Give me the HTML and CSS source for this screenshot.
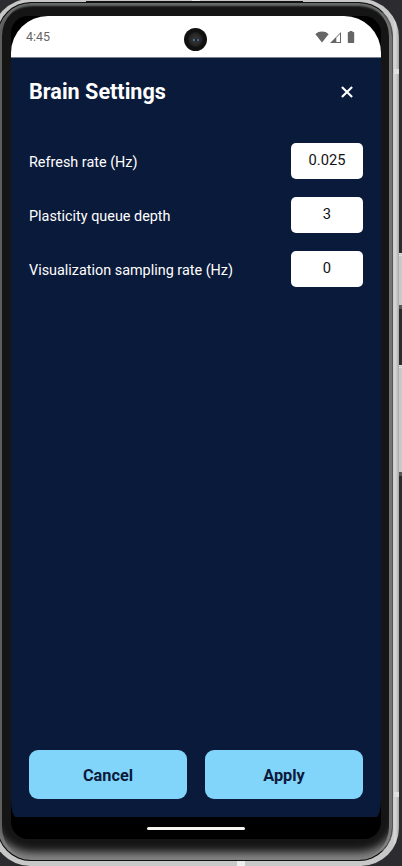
FILE: index.html
```html
<!DOCTYPE html>
<html lang="en">
<head>
<meta charset="utf-8">
<title>Brain Settings</title>
<link rel="stylesheet" href="styles.css">
</head>
<body>
<div class="side-button power"></div>
<div class="side-button volume"></div>
<div class="device">
  <i class="antenna top"></i><i class="antenna right upper"></i><i class="antenna right lower"></i><i class="antenna bottom"></i><i class="speaker"></i>
  <div class="bezel">
    <div class="screen">
      <div class="display">
        <header class="status">
          <span class="time">4:45</span>
          <svg class="status-icons" width="42" height="14" viewBox="0 0 42 14">
            <path d="M.4 4.200C2.200 2.200 4.500 1.500 7 1.500s4.800.7 6.600 2.700L7 12.500z"/>
            <path fill-rule="evenodd" d="M15 13 26 2v11zM21.300 7.700V12H25V4z"/>
            <path d="M33.500 2h1V1h3v1h1q.7 0 .7.700v9.600q0 .7-.7.700h-5q-.7 0-.7-.7V2.700q0-.7.7-.7z"/>
          </svg>
          <div class="camera"><i></i></div>
        </header>
        <main class="app">
          <div class="heading">
            <h1>Brain Settings</h1>
            <button class="close" aria-label="Close"><svg width="12" height="12" viewBox="0 0 12 12"><path d="M.9.9 11.100 11.100M11.100.9.9 11.100"/></svg></button>
          </div>
          <div class="fields">
            <div class="field"><span>Refresh rate (Hz)</span><div class="value">0.025</div></div>
            <div class="field"><span>Plasticity queue depth</span><div class="value">3</div></div>
            <div class="field"><span>Visualization sampling rate (Hz)</span><div class="value">0</div></div>
          </div>
          <div class="actions"><button>Cancel</button><button>Apply</button></div>
        </main>
        <div class="navigation"><i></i></div>
      </div>
    </div>
  </div>
</div>
</body>
</html>
```
FILE: styles.css
```css
* { box-sizing: border-box; }
html, body { width: 402px; height: 866px; margin: 0; overflow: hidden; }
body { position: relative; background: #2c2c30; font-family: Roboto, sans-serif; }
.device {
  position: relative;
  width: 407px; height: 867px;
  margin: -1px 0 0 -8px;
  padding: 3px 6px 5px 5px;
  border-radius: 38px;
  background: linear-gradient(90deg, #c8c8c8 0 401px, #d8d8d8 403px, #c4c4c4 405px, #a5a5a5);
}
.bezel {
  height: 859px;
  padding: 13px 12px 21px 13px;
  border: 1px solid #111;
  border-right-color: #555;
  border-radius: 34px;
  background: #151515;
  box-shadow: inset 0 -13px 9px -5px #858585, inset 0 3px 2px #686c69, inset 4px 0 #5d5d5d, inset -3px 0 #747474;
}
.screen { width: 370px; height: 823px; background: #000; border-radius: 17px; overflow: hidden; }
.display { display: flex; flex-direction: column; height: 823px; border-radius: 37px 37px 17px 17px; overflow: hidden; }
.status {
  position: relative;
  display: flex; align-items: center; justify-content: space-between;
  height: 42px;
  padding: 0 24px 0 15px;
  background: #fff;
  border-bottom: 1px solid #7b828e;
}
.time { color: #666; font-size: 12.500px; line-height: 16px; }
.status-icons { fill: #666; }
.camera {
  position: absolute; left: 173px; top: 12px;
  width: 23px; height: 23px; border-radius: 50%;
  display: flex; align-items: center; justify-content: center;
  background: radial-gradient(circle, #303030 0 3px, #252525 6px, #111 8px);
}
.camera i { width: 6px; height: 2px; background: linear-gradient(90deg, #437681 0 2px, #222 2px 4px, #405fa8 4px); }
.app {
  display: flex; flex-direction: column;
  height: 759px; padding: 19px 18px 18px;
  background: #0a1a3a;
  border-radius: 0 0 5px 5px / 0 0 18px 18px;
}
.heading { display: flex; align-items: center; justify-content: space-between; height: 30px; padding-right: 10px; color: #fff; }
h1 { margin: 0; font-size: 21.600px; line-height: 30px; font-weight: 700; }
.close { display: flex; padding: 0; border: 0; background: none; }
.close svg { fill: none; stroke: #fff; stroke-width: 2.100; }
.fields { display: flex; flex-direction: column; gap: 18px; margin-top: 36px; }
.field { display: flex; align-items: center; justify-content: space-between; height: 36px; color: #fff; font-size: 14.400px; }
.field span { padding-top: 2px; }
.value { width: 72px; height: 36px; background: #fff; border-radius: 5px; color: #111; font-size: 14.700px; line-height: 35px; text-align: center; }
.actions { display: grid; grid-template-columns: 1fr 1fr; gap: 18px; margin-top: auto; }
.actions button { height: 49px; padding: 1px 0 0; border: 0; border-radius: 9px; background: #81d4fa; color: #0a1a3a; font: 700 16.300px Roboto, sans-serif; }
.navigation { display: flex; justify-content: center; height: 22px; padding-top: 10px; }
.navigation i { width: 98px; height: 3px; border-radius: 2px; background: #f5f5f2; }
.side-button { position: absolute; left: 398px; width: 6px; border: 1px solid #666; border-top: 3px double #ddd; border-bottom: 4px solid #555; background: #c9c9c9; }
.power { top: 253px; height: 56px; }
.volume { top: 365px; height: 111px; }
.antenna { position: absolute; background: #eee; }
.antenna.top { left: 200px; top: 1px; width: 8px; height: 2px; }
.antenna.right { right: 0; width: 5px; height: 5px; background: #e0e0e0; }
.antenna.upper { top: 70px; }
.antenna.lower { top: 793px; }
.antenna.bottom { left: 245px; bottom: 0; width: 8px; height: 5px; }
.speaker { position: absolute; top: 2px; left: 94px; width: 217px; height: 2px; background: #111; }
```
